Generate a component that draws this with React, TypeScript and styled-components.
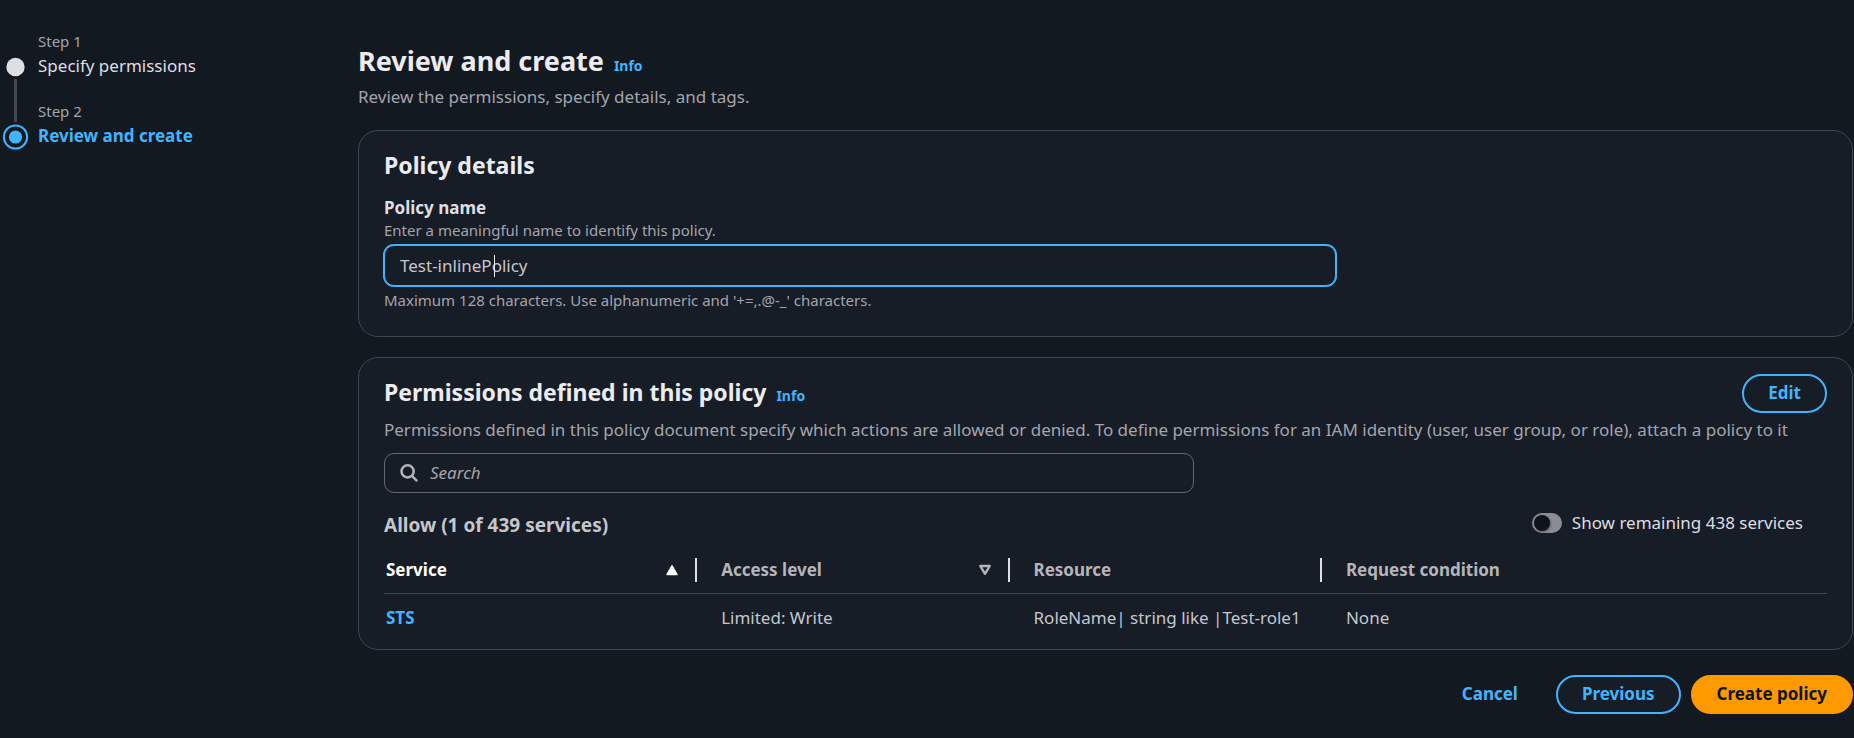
import React, { useState } from "react";
import styled, { createGlobalStyle, css } from "styled-components";

const color = {
  page: "#131920",
  card: "#171d26",
  border: "#424650",
  inputBorder: "#656871",
  blue: "#42b4ff",
  heading: "#ebebf0",
  text: "#dedee3",
  body: "#c6c6cd",
  muted: "#a4a4ad",
  orange: "#ff9900",
};

const GlobalStyle = createGlobalStyle`
  *, *::before, *::after { box-sizing: border-box; }
  body {
    margin: 0;
    background: ${color.page};
    color: ${color.body};
    font-family: "Noto Sans", "Open Sans", sans-serif;
    font-size: 17px;
    line-height: 24px;
  }
  button, input { font: inherit; color: inherit; }
  h1, h2, h3, p, ol { margin: 0; padding: 0; }
`;

const Page = styled.div`
  display: grid;
  grid-template-columns: 358px minmax(0, 1fr);
  min-height: 100vh;
  padding: 30px 1px 24px 0;
`;

const Steps = styled.ol`
  list-style: none;
`;

const Step = styled.li`
  display: grid;
  grid-template-columns: 31px 1fr;
  column-gap: 7px;
  height: 70px;
`;

const Rail = styled.div`
  display: flex;
  flex-direction: column;
  align-items: center;
  padding-top: 24px;
`;

const StepLine = styled.span`
  width: 3px;
  height: 43px;
  background: ${color.border};
`;

const StepNumber = styled.div`
  padding-bottom: 2px;
  font-size: 15px;
  line-height: 22px;
  color: ${color.muted};
`;

const StepTitle = styled.div<{ $current?: boolean }>`
  color: ${(p) => (p.$current ? color.blue : color.text)};
  font-weight: ${(p) => (p.$current ? 700 : 400)};
`;

const Main = styled.main`
  display: flex;
  flex-direction: column;
`;

const PageHeader = styled.header`
  padding: 11px 0 21px;
`;

const TitleRow = styled.div`
  display: flex;
  align-items: baseline;
  gap: 10px;
`;

const PageTitle = styled.h1`
  font-size: 27px;
  line-height: 40px;
  color: ${color.heading};
`;

const CardTitle = styled.h2`
  font-size: 23px;
  line-height: 32px;
  color: ${color.heading};
`;

const InfoLink = styled.a`
  font-size: 14px;
  font-weight: 700;
  color: ${color.blue};
  text-decoration: none;
`;

const Description = styled.p`
  margin-top: 4px;
  color: ${color.muted};
`;

const Card = styled.section`
  padding: 18px 25px 26px;
  background: ${color.card};
  border: 1px solid ${color.border};
  border-radius: 20px;
  & + & {
    margin-top: 20px;
    padding: 16px 25px 13px;
  }
`;

const Field = styled.div`
  display: flex;
  flex-direction: column;
  margin-top: 15px;
`;

const FieldLabel = styled.label`
  font-weight: 700;
  color: ${color.text};
`;

const Hint = styled.p`
  font-size: 15px;
  line-height: 20px;
  color: ${color.muted};
`;

const NameBox = styled.div`
  position: relative;
  width: 66%;
  margin: 5px 0 4px;
`;

const NameInput = styled.input`
  display: block;
  width: 100%;
  height: 41px;
  padding: 0 15px;
  color: ${color.body};
  background: ${color.card};
  border: 1px solid ${color.blue};
  border-radius: 10px;
  box-shadow: 0 0 0 1px ${color.blue};
  outline: none;
  caret-color: transparent;
`;

const Caret = styled.span`
  position: absolute;
  left: 110px;
  top: 10px;
  width: 1px;
  height: 22px;
  background: ${color.heading};
`;

const CardHeader = styled.div`
  display: flex;
  justify-content: space-between;
  align-items: flex-start;
  height: 40px;
  ${TitleRow} {
    padding-top: 2px;
  }
`;

const pill = css`
  height: 39px;
  padding: 0 24px 2px;
  border-radius: 20px;
  font-weight: 700;
  cursor: pointer;
`;

const OutlineButton = styled.button`
  ${pill}
  color: ${color.blue};
  background: ${color.card};
  border: 2px solid ${color.blue};
`;

const PrimaryButton = styled.button`
  ${pill}
  color: #0f141a;
  background: ${color.orange};
  border: 2px solid ${color.orange};
`;

const TextButton = styled.button`
  ${pill}
  padding-right: 28px;
  color: ${color.blue};
  background: transparent;
  border: 0;
`;

const SearchBox = styled.label`
  display: flex;
  align-items: center;
  gap: 12px;
  width: 810px;
  max-width: 100%;
  height: 40px;
  margin-top: 11px;
  padding: 0 15px;
  border: 1px solid ${color.inputBorder};
  border-radius: 10px;
`;

const SearchInput = styled.input`
  flex: 1;
  min-width: 0;
  padding: 0;
  background: transparent;
  border: 0;
  outline: none;
  &::placeholder {
    color: ${color.muted};
    font-style: italic;
    opacity: 1;
  }
`;

const ListHeader = styled.div`
  display: flex;
  justify-content: space-between;
  align-items: center;
  height: 60px;
  padding-right: 24px;
`;

const ListTitle = styled.h3`
  padding-top: 4px;
  font-size: 19px;
`;

const ToggleLabel = styled.label`
  display: flex;
  align-items: center;
  gap: 10px;
  color: ${color.text};
  cursor: pointer;
`;

const Toggle = styled.input`
  appearance: none;
  display: flex;
  align-items: center;
  width: 30px;
  height: 20px;
  margin: 0;
  padding: 2px;
  border-radius: 10px;
  background: #8c8c94;
  cursor: pointer;
  &::before {
    content: "";
    width: 16px;
    height: 16px;
    border-radius: 50%;
    background: #0f141a;
    box-shadow: 1px 1px 2px rgba(15, 20, 26, 0.4);
  }
  &:checked {
    justify-content: flex-end;
    background: ${color.blue};
  }
`;

const Table = styled.table`
  width: 100%;
  table-layout: fixed;
  border-collapse: collapse;
  text-align: left;
`;

const Column = styled.col<{ $share?: number }>`
  width: ${(p) => (p.$share ? `${p.$share}%` : "auto")};
`;

const HeadCell = styled.th<{ $active?: boolean }>`
  height: 40px;
  padding: 0 0 5px 24px;
  border-bottom: 1px solid ${color.border};
  color: ${(p) => (p.$active ? "#ffffff" : "#b4b4bb")};
  &:first-child { padding-left: 2px; }
`;

const HeadInner = styled.div<{ $divided: boolean }>`
  display: flex;
  align-items: center;
  justify-content: space-between;
  height: 24px;
  padding-right: 16px;
  border-right: ${(p) => (p.$divided ? `2px solid ${color.text}` : "0")};
`;

const SortButton = styled.button`
  display: flex;
  flex: 1;
  align-items: center;
  justify-content: space-between;
  padding: 0;
  border: 0;
  background: transparent;
  font-weight: 700;
  cursor: pointer;
`;

const Cell = styled.td`
  height: 43px;
  padding: 6px 0 0 24px;
  &:first-child { padding-left: 2px; }
`;

const ServiceLink = styled.a`
  color: ${color.blue};
  font-weight: 700;
  text-decoration: none;
`;

const Footer = styled.footer`
  display: flex;
  justify-content: flex-end;
  gap: 10px;
  margin-top: 25px;
`;

const DoneMark = () => (
  <svg width="31" height="25" viewBox="0 0 31 25" aria-hidden="true">
    <circle cx="15.5" cy="13" r="9.2" fill={color.text} />
  </svg>
);

const CurrentMark = () => (
  <svg width="31" height="26" viewBox="0 0 31 26" aria-hidden="true">
    <circle cx="15.5" cy="13" r="11.6" fill="none" stroke={color.blue} strokeWidth="2" />
    <circle cx="15.5" cy="13" r="6.6" fill={color.blue} />
  </svg>
);

const SearchIcon = () => (
  <svg width="18" height="18" viewBox="0 0 18 18" fill="none" stroke="#b4b4bb" strokeWidth="2.5" aria-hidden="true">
    <circle cx="7.6" cy="7.4" r="6.1" />
    <path d="M12 11.9l5.2 5.2" />
  </svg>
);

const SortUp = () => (
  <svg width="14" height="12" viewBox="0 0 14 12" aria-hidden="true">
    <path d="M7 1.8L12 10.5H2z" fill="#fff" stroke="#fff" strokeWidth="1.5" strokeLinejoin="round" />
  </svg>
);

const SortDown = () => (
  <svg width="14" height="12" viewBox="0 0 14 12" aria-hidden="true">
    <path d="M2.3 2h9.4L7 9.8z" fill="none" stroke="#b4b4bb" strokeWidth="2.4" strokeLinejoin="round" />
  </svg>
);

type HeadProps = { label: string; active?: boolean; divided?: boolean; icon?: React.ReactNode };

const Head = ({ label, active, divided = true, icon }: HeadProps) => (
  <HeadCell $active={active} scope="col" aria-sort={active ? "ascending" : undefined}>
    <HeadInner $divided={divided}>
      {icon ? (
        <SortButton type="button">
          {label}
          {icon}
        </SortButton>
      ) : (
        label
      )}
    </HeadInner>
  </HeadCell>
);

export default function App() {
  const [name, setName] = useState("Test-inlinePolicy");
  const [showRemaining, setShowRemaining] = useState(false);

  return (
    <>
      <GlobalStyle />
      <Page>
        <nav aria-label="Steps">
          <Steps>
            <Step>
              <Rail>
                <DoneMark />
                <StepLine />
              </Rail>
              <div>
                <StepNumber>Step 1</StepNumber>
                <StepTitle>Specify permissions</StepTitle>
              </div>
            </Step>
            <Step aria-current="step">
              <Rail>
                <CurrentMark />
              </Rail>
              <div>
                <StepNumber>Step 2</StepNumber>
                <StepTitle $current>Review and create</StepTitle>
              </div>
            </Step>
          </Steps>
        </nav>

        <Main>
          <PageHeader>
            <TitleRow>
              <PageTitle>Review and create</PageTitle>
              <InfoLink href="#info">Info</InfoLink>
            </TitleRow>
            <Description>Review the permissions, specify details, and tags.</Description>
          </PageHeader>

          <Card>
            <CardTitle>Policy details</CardTitle>
            <Field>
              <FieldLabel htmlFor="policy-name">Policy name</FieldLabel>
              <Hint>Enter a meaningful name to identify this policy.</Hint>
              <NameBox>
                <NameInput id="policy-name" value={name} onChange={(e) => setName(e.target.value)} />
                <Caret />
              </NameBox>
              <Hint>Maximum 128 characters. Use alphanumeric and '+=,.@-_' characters.</Hint>
            </Field>
          </Card>

          <Card>
            <CardHeader>
              <TitleRow>
                <CardTitle>Permissions defined in this policy</CardTitle>
                <InfoLink href="#permissions-info">Info</InfoLink>
              </TitleRow>
              <OutlineButton type="button">Edit</OutlineButton>
            </CardHeader>
            <Description>
              Permissions defined in this policy document specify which actions are allowed or denied. To define
              permissions for an IAM identity (user, user group, or role), attach a policy to it
            </Description>
            <SearchBox>
              <SearchIcon />
              <SearchInput type="search" placeholder="Search" aria-label="Search" />
            </SearchBox>
            <ListHeader>
              <ListTitle>Allow (1 of 439 services)</ListTitle>
              <ToggleLabel>
                <Toggle
                  type="checkbox"
                  role="switch"
                  checked={showRemaining}
                  onChange={(e) => setShowRemaining(e.target.checked)}
                />
                Show remaining 438 services
              </ToggleLabel>
            </ListHeader>
            <Table>
              <colgroup>
                <Column $share={21.7} />
                <Column $share={21.65} />
                <Column $share={21.65} />
                <Column />
              </colgroup>
              <thead>
                <tr>
                  <Head label="Service" active icon={<SortUp />} />
                  <Head label="Access level" icon={<SortDown />} />
                  <Head label="Resource" />
                  <Head label="Request condition" divided={false} />
                </tr>
              </thead>
              <tbody>
                <tr>
                  <Cell>
                    <ServiceLink href="#sts">STS</ServiceLink>
                  </Cell>
                  <Cell>Limited: Write</Cell>
                  <Cell>RoleName| string like |Test-role1</Cell>
                  <Cell>None</Cell>
                </tr>
              </tbody>
            </Table>
          </Card>

          <Footer>
            <TextButton type="button">Cancel</TextButton>
            <OutlineButton type="button">Previous</OutlineButton>
            <PrimaryButton type="button">Create policy</PrimaryButton>
          </Footer>
        </Main>
      </Page>
    </>
  );
}
